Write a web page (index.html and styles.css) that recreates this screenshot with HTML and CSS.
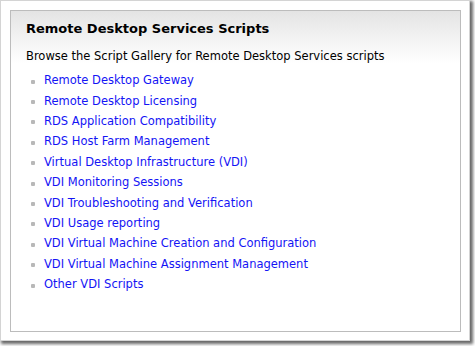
FILE: index.html
```html
<!DOCTYPE html>
<html>
<head>
<meta charset="utf-8">
<link rel="stylesheet" href="styles.css">
</head>
<body>
<div class="frame">
  <div class="panel">
    <h2 class="title">Remote Desktop Services Scripts</h2>
    <p class="intro">Browse the Script Gallery for Remote Desktop Services scripts</p>
    <ul class="links">
      <li><a href="#">Remote Desktop Gateway</a></li>
      <li><a href="#">Remote Desktop Licensing</a></li>
      <li><a href="#">RDS Application Compatibility</a></li>
      <li><a href="#">RDS Host Farm Management</a></li>
      <li><a href="#">Virtual Desktop Infrastructure (VDI)</a></li>
      <li><a href="#">VDI Monitoring Sessions</a></li>
      <li><a href="#">VDI Troubleshooting and Verification</a></li>
      <li><a href="#">VDI Usage reporting</a></li>
      <li><a href="#">VDI Virtual Machine Creation and Configuration</a></li>
      <li><a href="#">VDI Virtual Machine Assignment Management</a></li>
      <li><a href="#">Other VDI Scripts</a></li>
    </ul>
  </div>
</div>
</body>
</html>
```
FILE: styles.css
```css
html, body {
  margin: 0;
  padding: 0;
  background: #fff;
}
body {
  font-family: "DejaVu Sans", Verdana, sans-serif;
  width: 475px;
  height: 346px;
  overflow: hidden;
}
.frame {
  box-sizing: border-box;
  width: 470px;
  height: 341px;
  border: 1px solid #d4d4d4;
  background: #fff;
  padding: 9px;
  box-shadow: 2px 2px 3px 1px rgba(0,0,0,0.6);
}
.panel {
  box-sizing: border-box;
  width: 451px;
  height: 322px;
  border: 1px solid #bcbcbc;
  background: linear-gradient(#e4e4e4 0px, #ffffff 52px);
  padding: 10px 15px 0 15px;
}
.title {
  margin: 0;
  font-size: 13px;
  font-weight: bold;
  color: #000;
  line-height: 16px;
}
.intro {
  margin: 12px 0 0 0;
  font-size: 11.5px;
  line-height: 15px;
  color: #000;
}
.links {
  list-style: none;
  margin: 6px 0 0 0;
  padding: 0 0 0 5px;
}
.links li {
  display: flex;
  align-items: center;
  gap: 9px;
  height: 20.4px;
  font-size: 11.5px;
}
.links li::before {
  content: "";
  width: 4px;
  height: 4px;
  border-radius: 1px;
  background: #b8b8b8;
  margin-top: 3px;
}
.links a {
  color: #1414f5;
  text-decoration: none;
}
```
